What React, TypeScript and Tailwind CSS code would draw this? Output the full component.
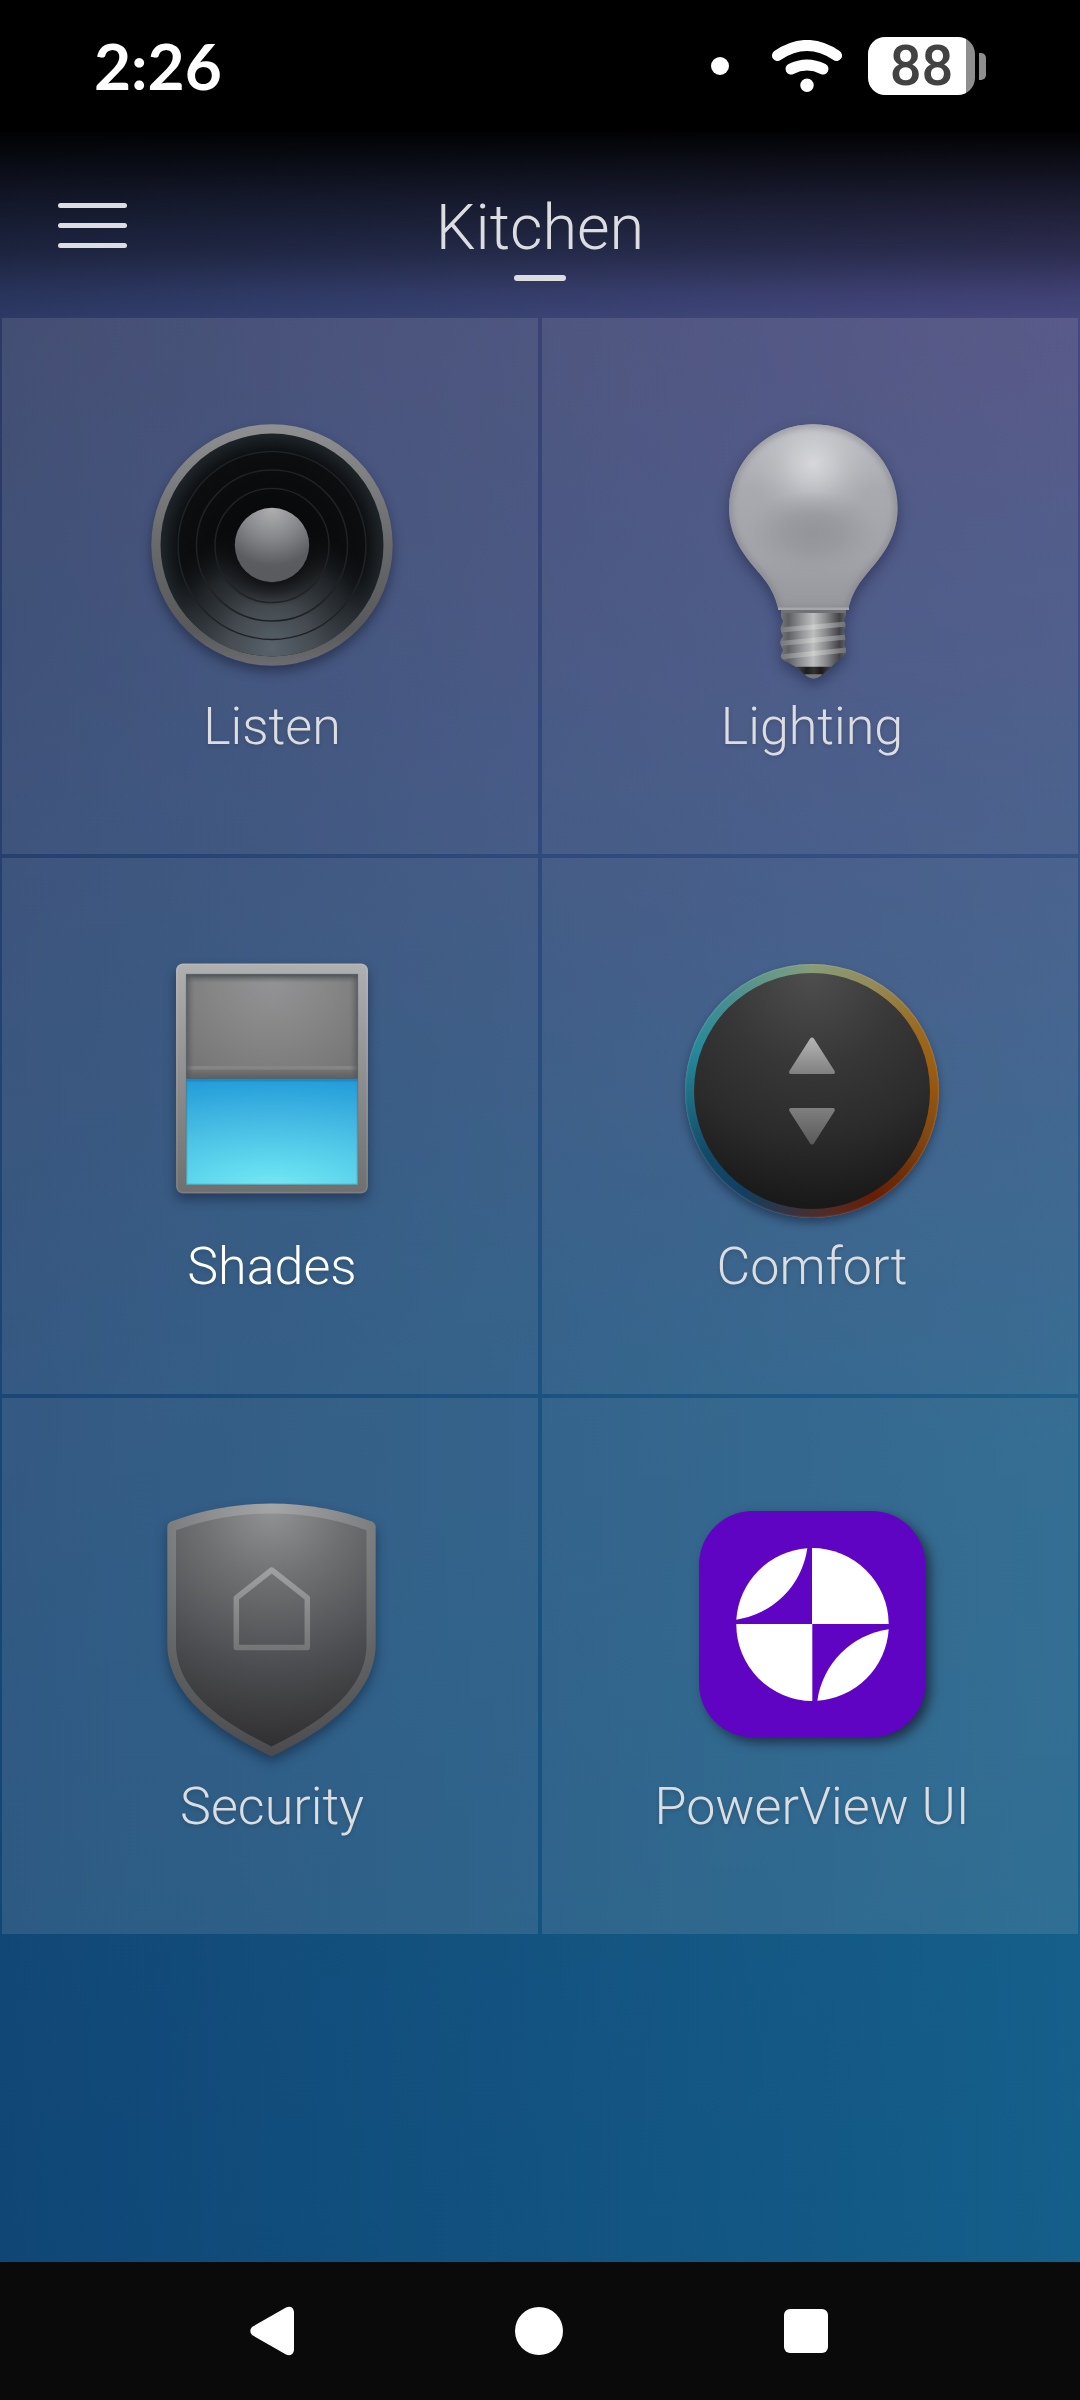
import type { ReactNode } from 'react'

type Tile = { label: string; icon: ReactNode; active?: boolean }

function SpeakerIcon() {
  return (
    <svg viewBox="0 0 256 256" aria-hidden="true" className="size-64 overflow-visible drop-shadow-[0_6px_6px_rgba(10,15,40,0.45)]">
      <defs>
        <linearGradient id="spk-rim" x1="0" y1="0" x2="0" y2="1">
          <stop offset="0" stopColor="#8f9092" />
          <stop offset="0.5" stopColor="#68696b" />
          <stop offset="0.85" stopColor="#58595b" />
          <stop offset="1" stopColor="#6a6c6f" />
        </linearGradient>
        <radialGradient id="spk-cone">
          <stop offset="0" stopColor="#060708" />
          <stop offset="0.82" stopColor="#0b0d0f" />
          <stop offset="1" stopColor="#1e2529" />
        </radialGradient>
        <radialGradient id="spk-glow" gradientUnits="userSpaceOnUse" cx="128" cy="226" r="125">
          <stop offset="0" stopColor="#58626b" />
          <stop offset="0.35" stopColor="#4d545a" stopOpacity="0.85" />
          <stop offset="0.7" stopColor="#30363b" stopOpacity="0.6" />
          <stop offset="1" stopColor="#15181b" stopOpacity="0" />
        </radialGradient>
        <radialGradient id="spk-dome-shade" gradientUnits="userSpaceOnUse" cx="128" cy="126" r="58">
          <stop offset="0.6" stopColor="#0a0a0b" stopOpacity="0.75" />
          <stop offset="1" stopColor="#0a0a0b" stopOpacity="0" />
        </radialGradient>
        <radialGradient id="spk-dome" cx="0.5" cy="0" r="0.85">
          <stop offset="0" stopColor="#b0b0b2" />
          <stop offset="0.5" stopColor="#85868a" />
          <stop offset="0.9" stopColor="#5c5d61" />
          <stop offset="1" stopColor="#5a5b5f" />
        </radialGradient>
      </defs>
      <circle cx="128" cy="122" r="120.7" fill="url(#spk-rim)" />
      <circle cx="128" cy="122" r="111.5" fill="url(#spk-cone)" />
      <circle cx="128" cy="122" r="111.5" fill="url(#spk-glow)" />
      <circle cx="128" cy="126" r="58" fill="url(#spk-dome-shade)" />
      <g fill="none" stroke="#202224" strokeWidth="1.5">
        <circle cx="128" cy="122.5" r="94" />
        <circle cx="128" cy="122.5" r="75.5" />
        <circle cx="128" cy="122.5" r="57" />
      </g>
      <circle cx="128" cy="122" r="37.2" fill="url(#spk-dome)" />
    </svg>
  )
}

function BulbIcon() {
  const glass =
    'M94.5 187 C91 172 86 163 76 151 C66 139 45 118 45 85.5 A84.3 84.3 0 0 1 213.6 85.5 C213.6 118 192.6 139 182.6 151 C172.6 163 167.6 172 164.1 187 Z'
  const screw =
    'M97 187 H162 V193 Q160 195 160 198 Q163 202 160 207 Q160 210 161 213 Q162 217 160 221 L162 226 Q163 231 156 236 L147 244 H112 L101 238 Q96 235 97 232 Q98 229 99 227 Q95 220 97 216 L99 213 Q95 206 98 201 L99 198 Q97 195 97 193 Z'
  return (
    <svg viewBox="0 0 256 256" aria-hidden="true" className="size-64 overflow-visible drop-shadow-[0_6px_7px_rgba(15,20,50,0.45)]">
      <defs>
        <linearGradient id="bulb-base" x1="0" y1="0" x2="0" y2="1">
          <stop offset="0" stopColor="#c2c3c7" />
          <stop offset="0.35" stopColor="#a9aaaf" />
          <stop offset="0.7" stopColor="#a3a4a9" />
          <stop offset="1" stopColor="#96979c" />
        </linearGradient>
        <radialGradient id="bulb-spot" gradientUnits="userSpaceOnUse" cx="129" cy="40" r="62">
          <stop offset="0" stopColor="#d8d8dc" />
          <stop offset="0.35" stopColor="#cdced2" stopOpacity="0.75" />
          <stop offset="1" stopColor="#b4b5ba" stopOpacity="0" />
        </radialGradient>
        <radialGradient id="bulb-shade">
          <stop offset="0" stopColor="#909197" stopOpacity="0.85" />
          <stop offset="0.45" stopColor="#93949a" stopOpacity="0.65" />
          <stop offset="1" stopColor="#9a9ba1" stopOpacity="0" />
        </radialGradient>
        <linearGradient id="bulb-metal">
          <stop offset="0" stopColor="#77787c" />
          <stop offset="0.12" stopColor="#5e5f62" />
          <stop offset="0.32" stopColor="#939497" />
          <stop offset="0.5" stopColor="#bdbebf" />
          <stop offset="0.68" stopColor="#8d8e90" />
          <stop offset="0.9" stopColor="#414245" />
          <stop offset="1" stopColor="#66676b" />
        </linearGradient>
        <linearGradient id="bulb-thread" gradientUnits="userSpaceOnUse" x1="97" y1="0" x2="162" y2="0">
          <stop offset="0" stopColor="#7b7c7f" />
          <stop offset="0.5" stopColor="#d0d1d0" />
          <stop offset="1" stopColor="#77787b" />
        </linearGradient>
        <linearGradient id="bulb-tip">
          <stop offset="0" stopColor="#444" />
          <stop offset="0.3" stopColor="#1c1c1c" />
          <stop offset="0.5" stopColor="#333" />
          <stop offset="0.7" stopColor="#1a1a1a" />
          <stop offset="1" stopColor="#444" />
        </linearGradient>
        <filter id="bulb-soft">
          <feGaussianBlur stdDeviation="3" />
        </filter>
        <clipPath id="bulb-screw"><path d={screw} /></clipPath>
        <clipPath id="bulb-glass"><path d={glass} /></clipPath>
      </defs>
      <path d={glass} fill="url(#bulb-base)" />
      <g clipPath="url(#bulb-glass)">
        <circle cx="129" cy="40" r="62" fill="url(#bulb-spot)" />
        <ellipse cx="129" cy="110" rx="68" ry="42" fill="url(#bulb-shade)" />
        <path d={glass} fill="none" stroke="#7c7d86" strokeOpacity="0.6" strokeWidth="6" filter="url(#bulb-soft)" />
      </g>
      <path d={screw} fill="url(#bulb-metal)" />
      <g clipPath="url(#bulb-screw)" stroke="url(#bulb-thread)" strokeWidth="5" strokeOpacity="0.8">
        <path d="M95 207 L164 201" />
        <path d="M95 220.5 L164 214" />
        <path d="M95 234 L164 227" />
      </g>
      <path d="M94 184.5 H165 V187 H94 Z" fill="#a6a7aa" />
      <path d="M97 187 H162 V190 H97 Z" fill="#707174" />
      <path d="M112.5 243.7 H147 L138 252 H121 Z" fill="url(#bulb-tip)" />
      <path d="M120.5 251.3 H138.5 Q129.5 260 120.5 251.3 Z" fill="#77787a" />
    </svg>
  )
}

function ShadesIcon() {
  return (
    <svg viewBox="0 0 256 256" aria-hidden="true" className="size-64 overflow-visible drop-shadow-[0_6px_6px_rgba(10,20,45,0.45)]">
      <defs>
        <linearGradient id="shd-frame" x1="0" y1="0" x2="0" y2="1">
          <stop offset="0" stopColor="#b0b0b1" />
          <stop offset="0.5" stopColor="#8e8e8f" />
          <stop offset="1" stopColor="#6f6f70" />
        </linearGradient>
        <radialGradient id="shd-blind" gradientUnits="userSpaceOnUse" cx="128" cy="14" r="125">
          <stop offset="0" stopColor="#949496" />
          <stop offset="0.5" stopColor="#858586" />
          <stop offset="1" stopColor="#747474" />
        </radialGradient>
        <radialGradient id="shd-sky" cx="0.5" cy="1.05" r="1.08" gradientTransform="translate(-0.3 0) scale(1.6 1)">
          <stop offset="0" stopColor="#76ebf6" />
          <stop offset="0.25" stopColor="#60d8ee" />
          <stop offset="0.6" stopColor="#45bbe3" />
          <stop offset="1" stopColor="#229bd9" />
        </radialGradient>
        <linearGradient id="shd-top" x1="0" y1="0" x2="0" y2="1">
          <stop offset="0" stopColor="#454849" />
          <stop offset="1" stopColor="#6a6a6a" stopOpacity="0" />
        </linearGradient>
        <linearGradient id="shd-side">
          <stop offset="0" stopColor="#4a4a4b" stopOpacity="0.7" />
          <stop offset="0.05" stopColor="#6a6a6a" stopOpacity="0" />
          <stop offset="0.95" stopColor="#6a6a6a" stopOpacity="0" />
          <stop offset="1" stopColor="#4a4a4b" stopOpacity="0.7" />
        </linearGradient>
        <linearGradient id="shd-hem" x1="0" y1="0" x2="0" y2="1">
          <stop offset="0" stopColor="#757575" />
          <stop offset="1" stopColor="#5d5d5e" />
        </linearGradient>
      </defs>
      <rect x="32" y="0.5" width="192" height="230" rx="7" fill="url(#shd-frame)" />
      <rect x="33" y="1.5" width="190" height="228" rx="6" fill="none" stroke="#fff" strokeOpacity="0.1" strokeWidth="1.5" />
      <rect x="42" y="11" width="172" height="105" fill="url(#shd-blind)" />
      <rect x="42" y="106" width="172" height="10" fill="url(#shd-hem)" />
      <rect x="42" y="103" width="172" height="3.5" fill="#858586" />
      <rect x="42" y="11" width="172" height="9" fill="url(#shd-top)" />
      <rect x="42" y="11" width="172" height="105" fill="url(#shd-side)" />
      <rect x="42" y="116" width="172" height="106" fill="url(#shd-sky)" />
      <rect x="42" y="115.5" width="172" height="3" fill="#1a7db4" fillOpacity="0.6" />
      <rect x="42.5" y="11.5" width="171" height="210" fill="none" stroke="#5c7178" strokeOpacity="0.55" strokeWidth="1.5" />
    </svg>
  )
}

function ComfortIcon() {
  return (
    <div className="m-px flex size-[254px] rounded-full bg-[conic-gradient(#879c78_0deg,#948a58_30deg,#9a6a20_60deg,#9c5c10_80deg,#83480f_110deg,#6b2c08_135deg,#661e06_150deg,#552a22_170deg,#3f3038_185deg,#26384c_200deg,#123f62_215deg,#124a68_240deg,#1f7186_270deg,#27899a_290deg,#4a9090_320deg,#6d9a85_345deg,#879c78_360deg)] p-[9px] shadow-[0_5px_8px_rgba(10,20,45,0.45),inset_0_0_2px_rgba(255,255,255,0.35)]">
      <div className="flex flex-1 items-center justify-center rounded-full bg-[radial-gradient(circle_at_50%_0%,#4e4e4e_0%,#373737_35%,#2b2b2b_62%,#191919_88%,#171717_100%)]">
        <svg viewBox="0 0 48 108" aria-hidden="true" className="h-27 w-12">
          <defs>
            <linearGradient id="cft-up" x1="0" y1="0" x2="0" y2="1">
              <stop offset="0" stopColor="#b5b5b5" />
              <stop offset="1" stopColor="#808080" />
            </linearGradient>
            <linearGradient id="cft-down" x1="0" y1="0" x2="0" y2="1">
              <stop offset="0" stopColor="#7f7f7f" />
              <stop offset="1" stopColor="#5a5a5a" />
            </linearGradient>
          </defs>
          <path d="M22 1.8 Q24 -0.6 26 1.8 L46.6 34 Q47.5 37 45 37 H3 Q0.5 37 1.4 34 Z" fill="url(#cft-up)" />
          <path d="M22 106.2 Q24 108.6 26 106.2 L46.6 74 Q47.5 71 45 71 H3 Q0.5 71 1.4 74 Z" fill="url(#cft-down)" />
        </svg>
      </div>
    </div>
  )
}

function ShieldIcon() {
  return (
    <svg viewBox="0 0 256 256" aria-hidden="true" className="size-64 overflow-visible drop-shadow-[0_6px_6px_rgba(5,20,45,0.45)]">
      <defs>
        <radialGradient id="sec-rim" gradientUnits="userSpaceOnUse" cx="128" cy="0" r="255">
          <stop offset="0" stopColor="#a6a7a9" />
          <stop offset="0.4" stopColor="#7d7e80" />
          <stop offset="0.75" stopColor="#5e5f61" />
          <stop offset="1" stopColor="#4a4a4c" />
        </radialGradient>
        <radialGradient id="sec-face" gradientUnits="userSpaceOnUse" cx="128" cy="4" r="242">
          <stop offset="0" stopColor="#929395" />
          <stop offset="0.3" stopColor="#6f7072" />
          <stop offset="0.65" stopColor="#4d4e51" />
          <stop offset="1" stopColor="#2f2f31" />
        </radialGradient>
        <linearGradient id="sec-house" gradientUnits="userSpaceOnUse" x1="0" y1="65" x2="0" y2="148">
          <stop offset="0" stopColor="#a0a1a2" />
          <stop offset="1" stopColor="#737476" />
        </linearGradient>
      </defs>
      <path
        d="M23.3 24 Q23.3 20 27 18.5 C58 7 92 0.5 127.5 0.5 C163 0.5 197 7 228 18.5 Q231.7 20 231.7 24 V141 C231.7 194 177 230 127.5 253.5 C78 230 23.3 194 23.3 141 Z"
        fill="url(#sec-rim)"
      />
      <path
        d="M32 27.3 C62 16.5 93 10.5 127.5 10.5 C162 10.5 193 16.5 222.5 27.3 V141 C222.5 189 175 220 127.5 243.5 C80 220 32 189 32 141 Z"
        fill="url(#sec-face)"
      />
      <path d="M127.7 67 L92.3 95 V144.5 H163.3 V95 Z" fill="none" stroke="url(#sec-house)" strokeWidth="5.5" strokeLinejoin="round" />
    </svg>
  )
}

function PowerViewIcon() {
  return (
    <svg viewBox="0 0 256 256" aria-hidden="true" className="size-64 overflow-visible drop-shadow-[5px_5px_6px_rgba(20,30,45,0.75)]">
      <rect x="15" y="8" width="226.3" height="226.3" rx="54" fill="#5f04c2" />
      <g fill="#fff">
        <path d="M128 45 A76.5 76.5 0 0 1 204.7 121 H128 Z" />
        <path d="M52.3 121 H128.3 V198 A76.5 76.5 0 0 1 52.3 121 Z" />
        <path d="M123.3 45.3 A76.5 76.5 0 0 0 52.3 116.7 A84 84 0 0 0 123.3 45.3 Z" />
        <path d="M204.7 126.3 A84 84 0 0 0 133.3 197.7 A76.5 76.5 0 0 0 204.7 126.3 Z" />
      </g>
    </svg>
  )
}

const tiles: Tile[] = [
  { label: 'Listen', icon: <SpeakerIcon /> },
  { label: 'Lighting', icon: <BulbIcon /> },
  { label: 'Shades', icon: <ShadesIcon />, active: true },
  { label: 'Comfort', icon: <ComfortIcon /> },
  { label: 'Security', icon: <ShieldIcon /> },
  { label: 'PowerView UI', icon: <PowerViewIcon /> },
]

function StatusBar() {
  return (
    <div className="flex h-[132px] items-center justify-between bg-black px-[94px] text-white">
      <time className="font-[Lato,sans-serif] text-[64px] leading-none font-bold">2:26</time>
      <div className="flex items-center">
        <span className="size-[18px] rounded-full bg-white" />
        <svg viewBox="0 0 70 52" role="img" aria-label="Wi-Fi" className="ml-[43px] h-[52px] w-[70px]">
          <g fill="none" stroke="#fff" strokeWidth="11" strokeLinecap="round">
            <path d="M5.5 15.5 Q35 -4.5 64.5 15.5" />
            <path d="M19 29 Q35 21 51 29" />
          </g>
          <circle cx="35" cy="45.3" r="6.7" fill="#fff" />
        </svg>
        <div className="ml-[26px] flex items-center gap-1">
          <div className="flex h-[58px] w-[107px] items-center justify-center rounded-[17px] bg-[linear-gradient(to_right,#fff_98px,#8e8e8e_98px)] text-[56px] leading-none font-medium text-[#424242]">
            88
          </div>
          <span className="h-[27px] w-[7px] rounded-r-[5px] bg-[#8e8e8e]" />
        </div>
      </div>
    </div>
  )
}

function Header() {
  return (
    <header className="grid h-[186px] grid-cols-3 bg-[linear-gradient(to_bottom,rgba(0,0,0,0.97)_0%,rgba(0,0,0,0.6)_37%,rgba(0,0,0,0.38)_64%,rgba(0,0,0,0.1)_86%,transparent_100%)]">
      <button type="button" aria-label="Menu" className="ml-[58px] flex w-[69px] flex-col justify-center gap-[15px]">
        <span className="h-[5px] rounded-full bg-[#dcdde0]" />
        <span className="h-[5px] rounded-full bg-[#dcdde0]" />
        <span className="h-[5px] rounded-full bg-[#dcdde0]" />
      </button>
      <div className="flex flex-col items-center pt-[58px]">
        <h1 className="text-[63px] leading-[75px] font-light whitespace-nowrap text-[#dcdde0]">Kitchen</h1>
        <span className="mt-[10px] h-[6px] w-[52px] rounded-full bg-[#dcdde0]" />
      </div>
    </header>
  )
}

function NavBar() {
  return (
    <nav className="flex h-[138px] bg-[#0a0a0a] pr-[141px] pl-[139px]">
      <button type="button" aria-label="Back" className="flex flex-1 items-center justify-center">
        <svg viewBox="0 0 44 50" className="h-[50px] w-11">
          <path d="M2 21 L36 1.5 Q43 -1 44 6 V44 Q43 51 36 48.5 L2 29 Q-1.5 25 2 21 Z" fill="#fff" />
        </svg>
      </button>
      <button type="button" aria-label="Home" className="flex flex-1 items-center justify-center">
        <span className="size-12 rounded-full bg-white" />
      </button>
      <button type="button" aria-label="Recent apps" className="flex flex-1 items-center justify-center">
        <span className="size-11 rounded-[6px] bg-white" />
      </button>
    </nav>
  )
}

export default function App() {
  return (
    <div className="flex min-h-screen flex-col bg-black font-[Roboto,sans-serif]">
      <StatusBar />
      <div className="flex flex-1 flex-col bg-[radial-gradient(100%_56%_at_100%_6%,rgba(110,50,127,0.4),transparent),linear-gradient(to_right,transparent,rgba(40,185,215,0.21)),linear-gradient(to_bottom,#2d3965_9%,#264070_34%,#1b4676_59%,#114776_85%,#0f4676_100%)]">
        <Header />
        <main className="grid grid-cols-2 gap-1 px-0.5">
          {tiles.map((t) => (
            <button
              key={t.label}
              type="button"
              className="flex aspect-square flex-col items-center bg-[#c8c8c8]/15 pt-[105px] pl-1"
            >
              {t.icon}
              <span
                className={`mt-[18px] text-[52px] leading-[60px] font-light whitespace-nowrap [text-shadow:0_2px_4px_rgba(0,0,0,0.15)] ${t.active ? 'text-white' : 'text-[#dcdde0]'}`}
              >
                {t.label}
              </span>
            </button>
          ))}
        </main>
      </div>
      <NavBar />
    </div>
  )
}
